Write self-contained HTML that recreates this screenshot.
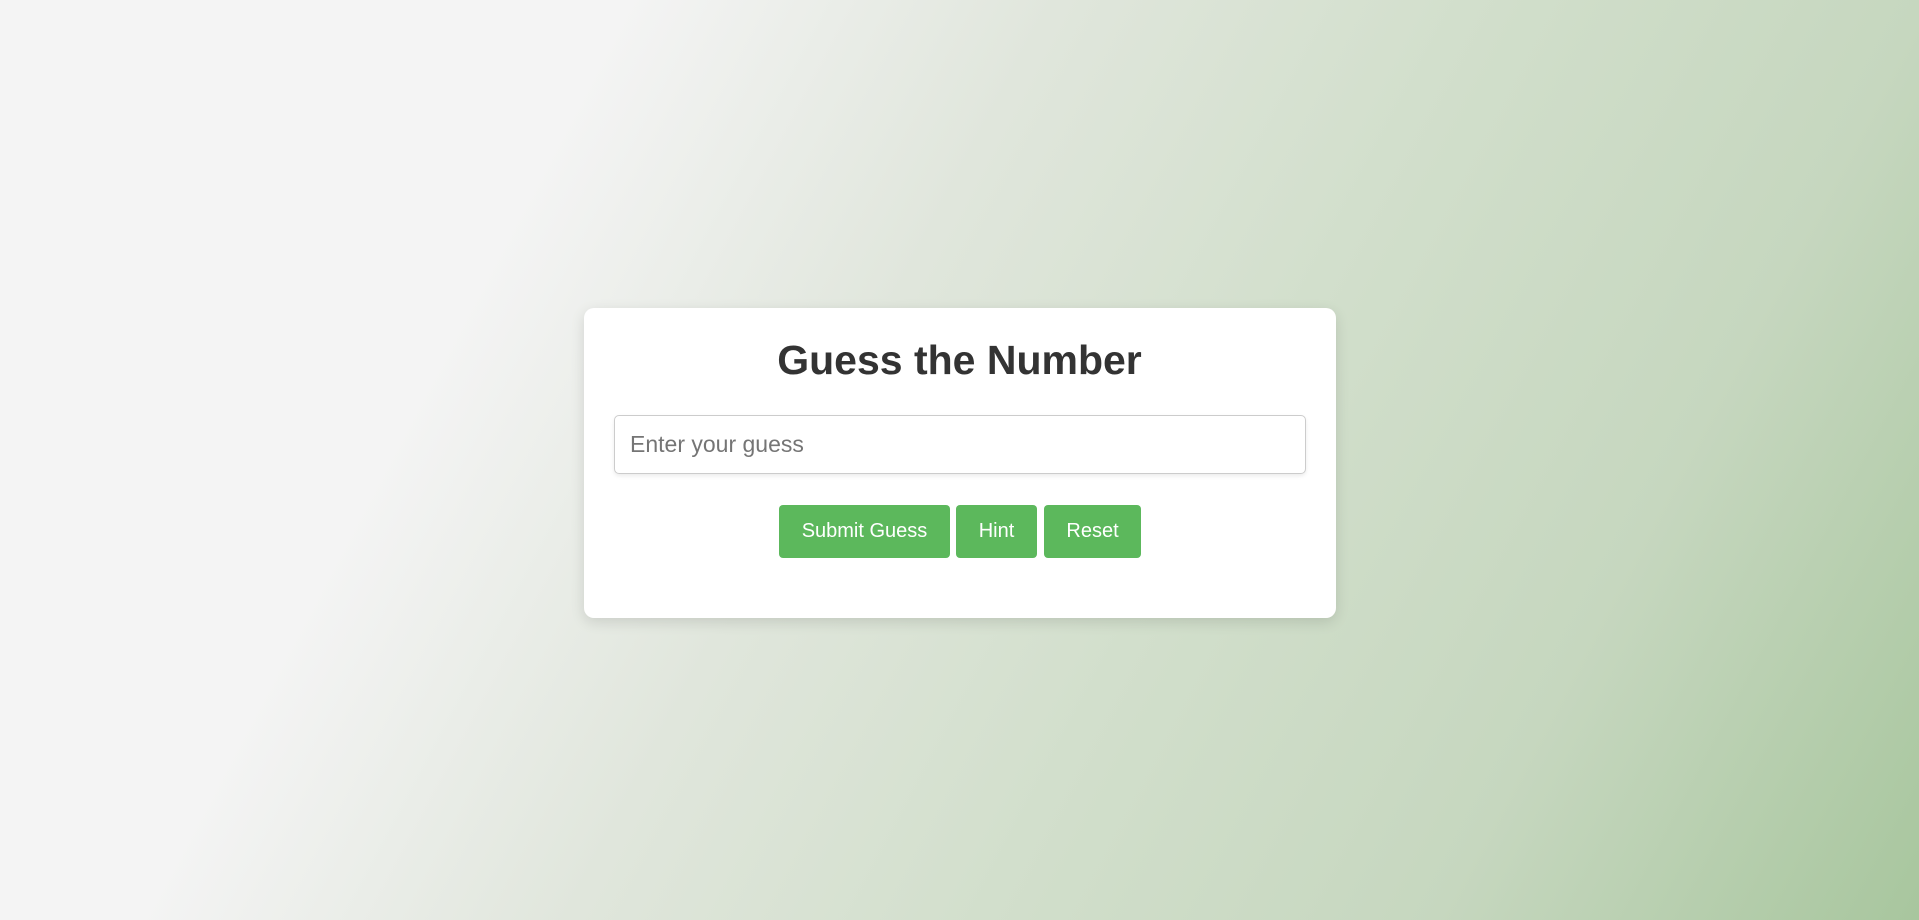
<!DOCTYPE html>
<html><head><style>
html,body{margin:0;padding:0;width:1919px;height:920px;overflow:hidden}
body{background:linear-gradient(118deg,#f4f4f4 0%,#f4f4f4 26%,#e0e6dc 44%,#d2dfcc 61%,#c6d7bf 80%,#a8c69e 100%);font-family:"Liberation Sans",Arial,sans-serif;position:relative}
.card{position:absolute;left:584px;top:308px;width:752px;height:310px;background:#fff;border-radius:10px;box-shadow:0 4px 14px rgba(0,0,0,0.12)}
h1{position:absolute;left:0;right:0;top:336px;margin:0;text-align:center;font-size:41px;font-weight:bold;color:#333;line-height:48px}
.inp{position:absolute;left:614px;top:415px;width:692px;height:59px;box-sizing:border-box;border:1px solid #ccc;border-radius:5px;box-shadow:0 2px 4px rgba(0,0,0,0.08);font-size:23px;color:#757575;padding-left:15px;line-height:57px}
.btn{position:absolute;top:505px;height:53px;background:#5cb85c;color:#fff;border-radius:4px;font-size:20px;line-height:53px;text-align:center}
</style></head><body>
<div class="card"></div>
<h1>Guess the Number</h1>
<div class="inp">Enter your guess</div>
<div class="btn" style="left:779px;width:171px">Submit Guess</div>
<div class="btn" style="left:956px;width:81px">Hint</div>
<div class="btn" style="left:1044px;width:97px">Reset</div>
</body></html>
